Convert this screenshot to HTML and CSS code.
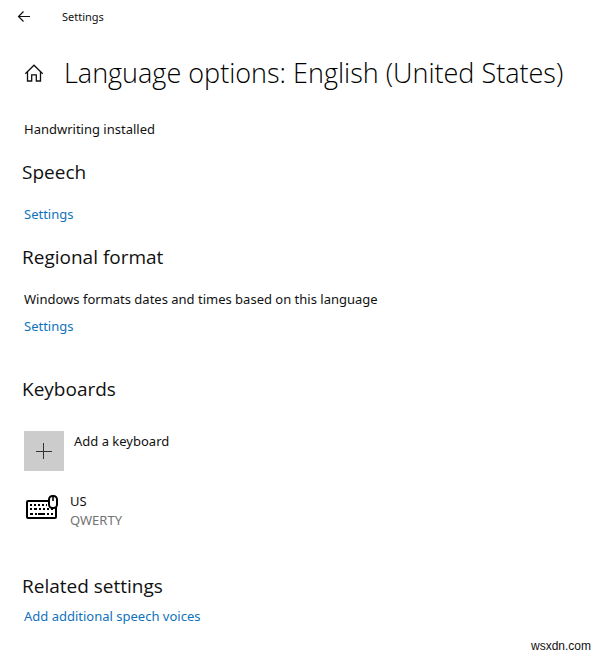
FILE: index.html
```html
<!DOCTYPE html>
<html lang="en">
<head>
  <meta charset="UTF-8">
  <meta name="viewport" content="width=device-width, initial-scale=1.0">
  <title>Settings</title>
  <link rel="stylesheet" href="styles.css">
</head>

<body>
  <header class="titlebar">
    <button class="icon-button" type="button" aria-label="Back">
      <svg width="14" height="12" viewBox="0 0 14 12" fill="none" stroke="currentColor" stroke-width="1.2">
        <path d="M13 5.5H1.5M6.5 0.5l-5 5 5 5"/>
      </svg>
    </button>
    <span class="titlebar-text">Settings</span>
  </header>

  <main class="page">
    <div class="page-header">
      <button class="icon-button" type="button" aria-label="Home">
        <svg width="20" height="20" viewBox="0 0 20 20" fill="none" stroke="currentColor" stroke-width="1.3">
          <path d="M1.3 10.7L10 2.2l8.7 8.5"/>
          <path d="M3.5 8.9v9.1h4.2v-6.2h4.6v6.2h4.2V8.9"/>
        </svg>
      </button>
      <h1>Language options: English (United States)</h1>
    </div>

    <p class="status">Handwriting installed</p>

    <section class="speech">
      <h2>Speech</h2>
      <a href="#">Settings</a>
    </section>

    <section class="regional">
      <h2>Regional format</h2>
      <p>Windows formats dates and times based on this language</p>
      <a href="#">Settings</a>
    </section>

    <section class="keyboards">
      <h2>Keyboards</h2>
      <button class="add-keyboard" type="button">
        <span class="add-tile">
          <svg width="16" height="16" viewBox="0 0 16 16" stroke="#333" stroke-width="1">
            <path d="M7.5 0v16M0 8.5h16"/>
          </svg>
        </span>
        <span>Add a keyboard</span>
      </button>

      <div class="keyboard">
        <svg width="34" height="26" viewBox="0 0 34 26" fill="none" stroke="#000">
          <rect x="2" y="6" width="29" height="17" rx="1" stroke-width="2"/>
          <g stroke-width="2">
            <path d="M5 10h17" stroke-dasharray="2 2"/>
            <path d="M5 14h2M9 14h3M14 14h2M18 14h2M22 14h2M26 14h2"/>
            <path d="M5 19h3M10 19h2M13 19h7M22 19h2M26 19h2"/>
          </g>
          <!-- mouse -->
          <rect x="24" y="1" width="8" height="12" rx="3.5" fill="#fff" stroke-width="2"/>
          <path d="M28 1v5" stroke-width="1.6"/>
        </svg>
        <div class="keyboard-text">
          <div>US</div>
          <div class="layout">QWERTY</div>
        </div>
      </div>
    </section>

    <section class="related">
      <h2>Related settings</h2>
      <a href="#">Add additional speech voices</a>
    </section>
  </main>

  <footer class="watermark">wsxdn.com</footer>
</body>
</html>
```
FILE: styles.css
```css
:root {
  --text: #111;
  --muted: #737373;
  --link: #0f72bd;
  --tile: #ccc;
}

* {
  box-sizing: border-box;
}

body {
  margin: 0;
  font-family: "Noto Sans", "Open Sans", sans-serif;
  font-size: 13px;
  line-height: 20px;
  color: var(--text);
  background: #fff;
}

h1, h2, p {
  margin: 0;
}

h1, h2 {
  font-family: "Open Sans", "Noto Sans", sans-serif;
}

h1 {
  font-size: 27px;
  font-weight: 300;
  line-height: 36px;
  color: #000;
}

h2 {
  font-size: 19px;
  font-weight: 400;
  line-height: 28px;
  margin-bottom: 18px;
}

a {
  display: table;
  color: var(--link);
  text-decoration: none;
}

a:hover {
  color: var(--muted);
}

button {
  padding: 0;
  border: 0;
  background: none;
  font: inherit;
  color: inherit;
}

svg {
  display: block;
  flex: none;
}

.titlebar {
  display: flex;
  align-items: center;
  gap: 31px;
  height: 33px;
  padding-left: 17px;
}

.titlebar-text {
  font-size: 11px;
}

.page {
  padding: 0 22px;
}

.page-header {
  display: flex;
  align-items: center;
  gap: 20px;
  padding: 22px 0 28px 2px;
}

.status {
  margin-bottom: 19px;
}

.status,
section p,
section a,
.add-keyboard,
.keyboard {
  margin-left: 2px;
}

.speech {
  margin-bottom: 19px;
}

.regional p {
  margin-bottom: 7px;
}

.regional {
  margin-bottom: 39px;
}

.keyboards {
  margin-bottom: 42px;
}

.keyboards h2 {
  margin-bottom: 28px;
}

.add-keyboard {
  display: flex;
  gap: 10px;
  margin-bottom: 21px;
}

.add-tile {
  display: flex;
  align-items: center;
  justify-content: center;
  width: 40px;
  height: 40px;
  background: var(--tile);
}

.keyboard {
  display: flex;
  gap: 11px;
  padding-left: 1px;
  line-height: 19px;
}

.keyboard svg {
  margin-top: 3px;
}

.layout {
  color: var(--muted);
}

.related h2 {
  margin-bottom: 6px;
}

.watermark {
  margin-top: 12px;
  padding-right: 12px;
  font-family: "Liberation Sans", sans-serif;
  font-size: 12px;
  line-height: 16px;
  text-align: right;
}
```
